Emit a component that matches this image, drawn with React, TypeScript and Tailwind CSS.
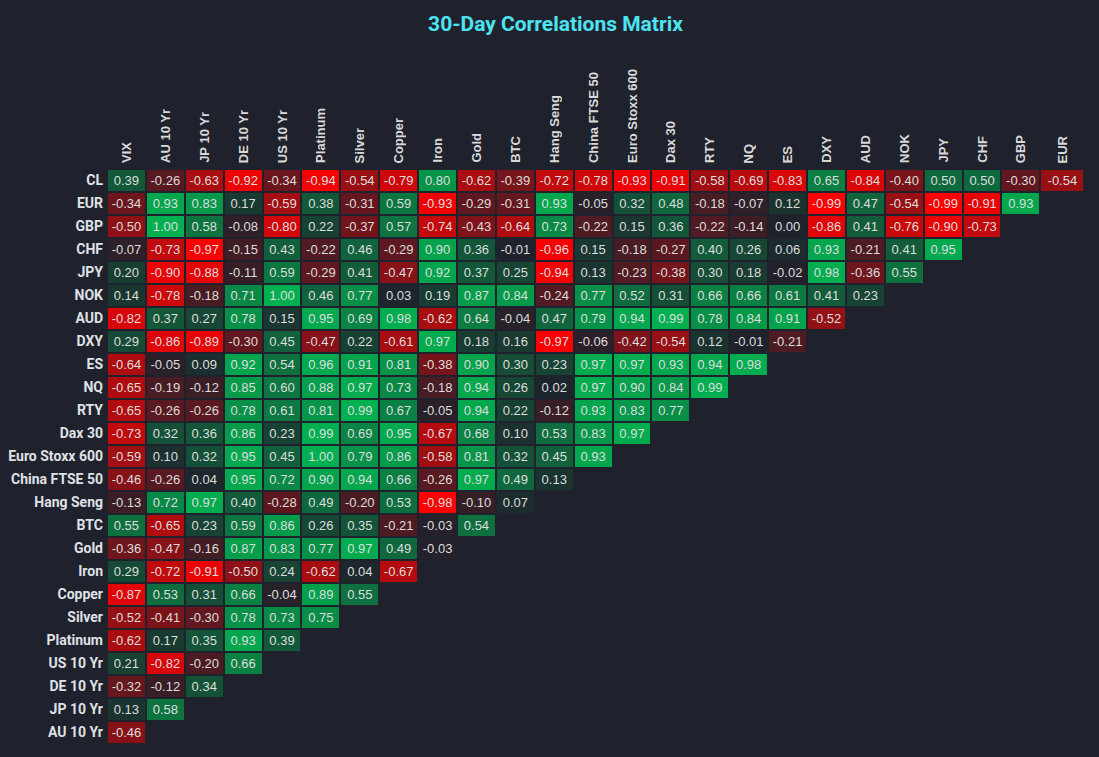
import React from 'react';

const columns = [
  'VIX', 'AU 10 Yr', 'JP 10 Yr', 'DE 10 Yr', 'US 10 Yr', 'Platinum', 'Silver', 'Copper',
  'Iron', 'Gold', 'BTC', 'Hang Seng', 'China FTSE 50', 'Euro Stoxx 600', 'Dax 30', 'RTY',
  'NQ', 'ES', 'DXY', 'AUD', 'NOK', 'JPY', 'CHF', 'GBP', 'EUR',
];

const rows: [string, number[]][] = [
  ['CL', [0.39, -0.26, -0.63, -0.92, -0.34, -0.94, -0.54, -0.79, 0.8, -0.62, -0.39, -0.72, -0.78, -0.93, -0.91, -0.58, -0.69, -0.83, 0.65, -0.84, -0.4, 0.5, 0.5, -0.3, -0.54]],
  ['EUR', [-0.34, 0.93, 0.83, 0.17, -0.59, 0.38, -0.31, 0.59, -0.93, -0.29, -0.31, 0.93, -0.05, 0.32, 0.48, -0.18, -0.07, 0.12, -0.99, 0.47, -0.54, -0.99, -0.91, 0.93]],
  ['GBP', [-0.5, 1.0, 0.58, -0.08, -0.8, 0.22, -0.37, 0.57, -0.74, -0.43, -0.64, 0.73, -0.22, 0.15, 0.36, -0.22, -0.14, 0.0, -0.86, 0.41, -0.76, -0.9, -0.73]],
  ['CHF', [-0.07, -0.73, -0.97, -0.15, 0.43, -0.22, 0.46, -0.29, 0.9, 0.36, -0.01, -0.96, 0.15, -0.18, -0.27, 0.4, 0.26, 0.06, 0.93, -0.21, 0.41, 0.95]],
  ['JPY', [0.2, -0.9, -0.88, -0.11, 0.59, -0.29, 0.41, -0.47, 0.92, 0.37, 0.25, -0.94, 0.13, -0.23, -0.38, 0.3, 0.18, -0.02, 0.98, -0.36, 0.55]],
  ['NOK', [0.14, -0.78, -0.18, 0.71, 1.0, 0.46, 0.77, 0.03, 0.19, 0.87, 0.84, -0.24, 0.77, 0.52, 0.31, 0.66, 0.66, 0.61, 0.41, 0.23]],
  ['AUD', [-0.82, 0.37, 0.27, 0.78, 0.15, 0.95, 0.69, 0.98, -0.62, 0.64, -0.04, 0.47, 0.79, 0.94, 0.99, 0.78, 0.84, 0.91, -0.52]],
  ['DXY', [0.29, -0.86, -0.89, -0.3, 0.45, -0.47, 0.22, -0.61, 0.97, 0.18, 0.16, -0.97, -0.06, -0.42, -0.54, 0.12, -0.01, -0.21]],
  ['ES', [-0.64, -0.05, 0.09, 0.92, 0.54, 0.96, 0.91, 0.81, -0.38, 0.9, 0.3, 0.23, 0.97, 0.97, 0.93, 0.94, 0.98]],
  ['NQ', [-0.65, -0.19, -0.12, 0.85, 0.6, 0.88, 0.97, 0.73, -0.18, 0.94, 0.26, 0.02, 0.97, 0.9, 0.84, 0.99]],
  ['RTY', [-0.65, -0.26, -0.26, 0.78, 0.61, 0.81, 0.99, 0.67, -0.05, 0.94, 0.22, -0.12, 0.93, 0.83, 0.77]],
  ['Dax 30', [-0.73, 0.32, 0.36, 0.86, 0.23, 0.99, 0.69, 0.95, -0.67, 0.68, 0.1, 0.53, 0.83, 0.97]],
  ['Euro Stoxx 600', [-0.59, 0.1, 0.32, 0.95, 0.45, 1.0, 0.79, 0.86, -0.58, 0.81, 0.32, 0.45, 0.93]],
  ['China FTSE 50', [-0.46, -0.26, 0.04, 0.95, 0.72, 0.9, 0.94, 0.66, -0.26, 0.97, 0.49, 0.13]],
  ['Hang Seng', [-0.13, 0.72, 0.97, 0.4, -0.28, 0.49, -0.2, 0.53, -0.98, -0.1, 0.07]],
  ['BTC', [0.55, -0.65, 0.23, 0.59, 0.86, 0.26, 0.35, -0.21, -0.03, 0.54]],
  ['Gold', [-0.36, -0.47, -0.16, 0.87, 0.83, 0.77, 0.97, 0.49, -0.03]],
  ['Iron', [0.29, -0.72, -0.91, -0.5, 0.24, -0.62, 0.04, -0.67]],
  ['Copper', [-0.87, 0.53, 0.31, 0.66, -0.04, 0.89, 0.55]],
  ['Silver', [-0.52, -0.41, -0.3, 0.78, 0.73, 0.75]],
  ['Platinum', [-0.62, 0.17, 0.35, 0.93, 0.39]],
  ['US 10 Yr', [0.21, -0.82, -0.2, 0.66]],
  ['DE 10 Yr', [-0.32, -0.12, 0.34]],
  ['JP 10 Yr', [0.13, 0.58]],
  ['AU 10 Yr', [-0.46]],
];

// neutral colour at 0, blending toward red at -1 and green at +1
const base = [30, 34, 43];
const red = [255, 0, 0];
const green = [0, 176, 80];

function cellColor(v: number) {
  const target = v < 0 ? red : green;
  const t = Math.min(Math.abs(v), 1);
  const c = base.map((b, i) => Math.round(b + (target[i] - b) * t));
  return `rgb(${c[0]}, ${c[1]}, ${c[2]})`;
}

const gridCols = 'grid grid-cols-[106px_repeat(24,36.9px)_42px] gap-x-[2px] gap-y-[2px]';

export default function App() {
  return (
    <div className="min-h-screen w-full bg-[#1f222c] pt-[10px] font-['Liberation_Sans',Arial,sans-serif]">
      <h1 className="pl-[12px] text-center text-[21px] leading-[29px] font-bold text-[#4ee3f2] font-['Roboto',sans-serif]">
        30-Day Correlations Matrix
      </h1>

      <div className={gridCols}>
        <div className="h-[129px]" />
        {columns.map((col) => (
          <div key={col} className="flex h-[129px] items-end justify-center pb-[5px]">
            <span className="rotate-180 text-[13px] leading-[15px] font-bold whitespace-nowrap text-[#d9d9d9] [writing-mode:vertical-rl]">
              {col}
            </span>
          </div>
        ))}

        {rows.map(([label, values]) => (
          <React.Fragment key={label}>
            <div className="flex h-[21px] items-center justify-end pr-[3px] text-[14px] font-bold whitespace-nowrap text-[#dfe1e6] font-['Roboto',sans-serif]">
              {label}
            </div>
            {columns.map((col, i) =>
              i < values.length ? (
                <div
                  key={col}
                  className="flex h-[21px] items-center justify-center text-[13px] text-[#dddddd]"
                  style={{ backgroundColor: cellColor(values[i]) }}
                >
                  {values[i].toFixed(2)}
                </div>
              ) : (
                <div key={col} className="h-[21px]" />
              )
            )}
          </React.Fragment>
        ))}
      </div>
    </div>
  );
}
